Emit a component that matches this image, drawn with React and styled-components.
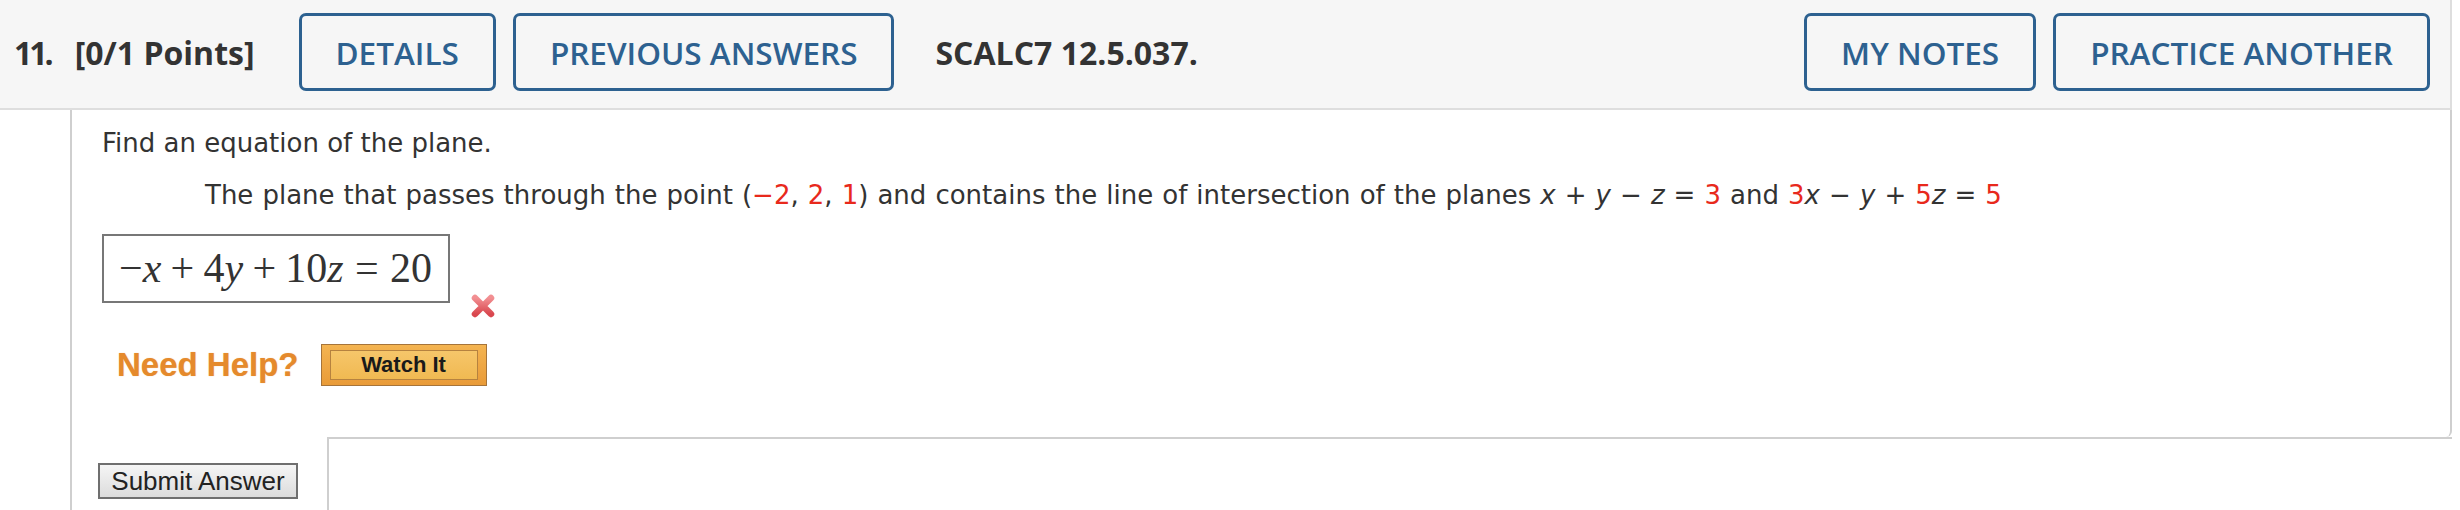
import React from "react";
import styled, { createGlobalStyle } from "styled-components";

const GlobalStyle = createGlobalStyle`
  html, body {
    margin: 0;
    padding: 0;
    background: #fff;
  }
  * {
    box-sizing: border-box;
  }
`;

const App = () => {
  return (
    <>
      <GlobalStyle />
      <Page>
        <Header>
          <Number>11.</Number>
          <Points>[0/1 Points]</Points>
          <HeaderButton>DETAILS</HeaderButton>
          <HeaderButton>PREVIOUS ANSWERS</HeaderButton>
          <Code>SCALC7 12.5.037.</Code>
          <RightGroup>
            <HeaderButton>MY NOTES</HeaderButton>
            <HeaderButton>PRACTICE ANOTHER</HeaderButton>
          </RightGroup>
        </Header>

        <Body>
          <Question>
            <Prompt>Find an equation of the plane.</Prompt>
            <Statement>
              The plane that passes through the point (<Red>−2</Red>,{" "}
              <Red>2</Red>, <Red>1</Red>) and contains the line of intersection
              of the planes <Var>x</Var> + <Var>y</Var> − <Var>z</Var> ={" "}
              <Red>3</Red> and <Red>3</Red>
              <Var>x</Var> − <Var>y</Var> + <Red>5</Red>
              <Var>z</Var> = <Red>5</Red>
            </Statement>

            <AnswerRow>
              <MathBox>
                <span>−</span>
                <MathVar>x</MathVar>
                <MathOp>+</MathOp>
                <span>4</span>
                <MathVar>y</MathVar>
                <MathOp>+</MathOp>
                <span>10</span>
                <MathVar>z</MathVar>
                <MathOp wide>=</MathOp>
                <span>20</span>
              </MathBox>
              <WrongMark viewBox="0 0 26 26">
                <defs>
                  <linearGradient id="xgrad" x1="0" y1="0" x2="0" y2="1">
                    <stop offset="0" stopColor="#f28f92" />
                    <stop offset="1" stopColor="#d9474e" />
                  </linearGradient>
                </defs>
                <path
                  d="M5 5 L21 21 M21 5 L5 21"
                  stroke="url(#xgrad)"
                  strokeWidth="6.5"
                  strokeLinecap="round"
                  fill="none"
                />
              </WrongMark>
            </AnswerRow>

            <HelpRow>
              <NeedHelp>Need Help?</NeedHelp>
              <WatchButton>
                <WatchInner>Watch It</WatchInner>
              </WatchButton>
            </HelpRow>
          </Question>

          <Footer>
            <SubmitButton>Submit Answer</SubmitButton>
            <SaveBox />
          </Footer>
        </Body>
      </Page>
    </>
  );
};

export default App;

const Page = styled.div`
  width: 2460px;
  height: 510px;
  overflow: hidden;
  background: #fff;
`;

const Header = styled.div`
  width: 2452px;
  height: 110px;
  display: flex;
  align-items: center;
  padding: 0 20px 4px 14px;
  background: #f6f6f6;
  border-bottom: 2px solid #dedede;
  border-right: 2px solid #dedede;
  font-family: "Open Sans", "Liberation Sans", sans-serif;
  color: #333;
`;

const Number = styled.span`
  font-size: 32px;
  font-weight: 700;
  letter-spacing: -3px;
`;

const Points = styled.span`
  font-size: 32px;
  font-weight: 700;
  margin-left: 24px;
  margin-right: 44px;
`;

const Code = styled.span`
  font-size: 32px;
  font-weight: 700;
  margin-left: 41px;
`;

const HeaderButton = styled.div`
  height: 78px;
  display: flex;
  align-items: center;
  padding: 0 34px;
  border: 3px solid #2d6190;
  border-radius: 7px;
  color: #2d6190;
  font-size: 31.5px;
  font-weight: 600;
  white-space: nowrap;

  & + & {
    margin-left: 17px;
  }
`;

const RightGroup = styled.div`
  display: flex;
  margin-left: auto;
`;

const Body = styled.div`
  margin-left: 70px;
  width: 2382px;
  border-left: 2px solid #cfcfcf;
`;

const Question = styled.div`
  padding: 18px 0 51px 30px;
  border-right: 2px solid #cfcfcf;
  border-bottom-right-radius: 6px;
  font-family: "DejaVu Sans", Verdana, sans-serif;
  font-size: 26px;
  color: #333;
`;

const Prompt = styled.div`
  line-height: 30px;
  height: 30px;
  margin-bottom: 22px;
`;

const Statement = styled.div`
  line-height: 30px;
  height: 30px;
  margin-left: 103px;
  white-space: nowrap;
  word-spacing: 0.8px;
  margin-bottom: 24px;
`;

const Red = styled.span`
  color: #e8291c;
`;

const Var = styled.i`
  font-style: italic;
`;

const AnswerRow = styled.div`
  display: flex;
  align-items: flex-start;
  height: 84px;
`;

const MathBox = styled.div`
  width: 348px;
  height: 69px;
  border: 2px solid #777;
  display: flex;
  align-items: center;
  padding: 0 0 2px 15px;
  font-family: "Liberation Serif", "DejaVu Serif", serif;
  font-size: 42px;
  color: #333;
`;

const MathVar = styled.span`
  font-style: italic;
`;

const MathOp = styled.span`
  margin: 0 ${props => (props.wide ? "0.27em" : "0.22em")};
`;

const WrongMark = styled.svg`
  width: 26px;
  height: 26px;
  margin: 59px 0 0 20px;
`;

const HelpRow = styled.div`
  display: flex;
  align-items: center;
  margin: 26px 0 0 15px;
  height: 42px;
`;

const NeedHelp = styled.span`
  font-family: "Liberation Sans", Arial, sans-serif;
  font-weight: 700;
  font-size: 33px;
  color: #e58a2c;
  text-shadow: 0 0 1px rgba(229, 138, 44, 0.6);
  margin-right: 22px;
`;

const WatchButton = styled.div`
  width: 166px;
  height: 42px;
  padding: 5px 8px 5px 8px;
  border: 1px solid #a6743a;
  background: linear-gradient(#f4b451, #e99b38);
  display: flex;
`;

const WatchInner = styled.div`
  flex: 1;
  border: 1px solid #b6823f;
  background: linear-gradient(#f6c66a, #f0b952);
  display: flex;
  align-items: center;
  justify-content: center;
  font-family: "Liberation Sans", Arial, sans-serif;
  font-weight: 700;
  font-size: 22px;
  color: #1a1a1a;
`;

const Footer = styled.div`
  display: flex;
  align-items: flex-start;
  height: 80px;
`;

const SubmitButton = styled.div`
  margin: 26px 0 0 26px;
  width: 200px;
  height: 36px;
  border: 2px solid #6f6f6f;
  background: linear-gradient(#f5f5f5, #dcdcdc);
  display: flex;
  align-items: center;
  justify-content: center;
  font-family: "Liberation Sans", Arial, sans-serif;
  font-size: 26px;
  color: #222;
`;

const SaveBox = styled.div`
  flex: 1;
  height: 100%;
  margin-left: 29px;
  border-top: 2px solid #cfcfcf;
  border-left: 2px solid #cfcfcf;
`;
